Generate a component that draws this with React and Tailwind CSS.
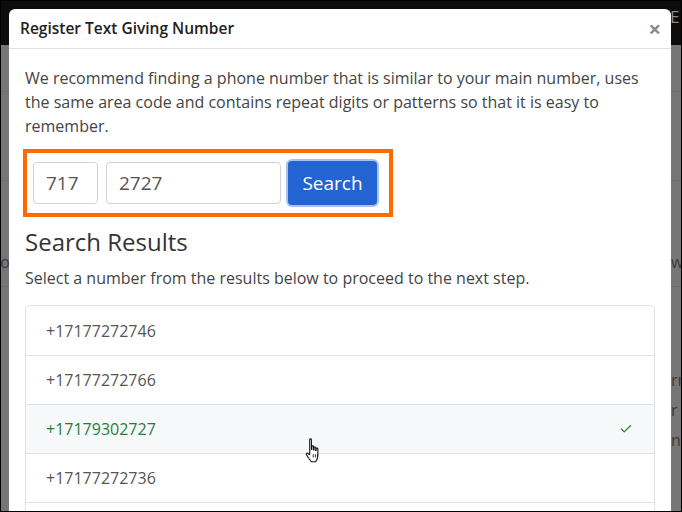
import { Check } from 'lucide-react';

const numeros = [
  { tel: '+17177272746' },
  { tel: '+17177272766' },
  { tel: '+17179302727', elegido: true },
  { tel: '+17177272736' },
  { tel: '+17177272756' },
];

function Cursor() {
  return (
    <svg className="absolute left-[303px] top-[436px]" width="20" height="28" viewBox="0 0 18 26">
      <path
        d="M5 2.5c0-1 1.6-1 1.6 0v9h.4V9c0-1 1.6-1 1.6 0v3h.4v-2c0-1 1.6-1 1.6 0v2.5h.4V11c0-1 1.6-1 1.6 0v6.5c0 2.5-1 4-2 5.5H6.5c-1-1.5-3-4-4.5-6.5-.5-1 .5-2 1.5-1.2L5 16.5z"
        fill="#fff"
        stroke="#111"
        strokeWidth="1"
        strokeLinejoin="round"
      />
      <path d="M8.3 19v-3M10.3 19v-3M12.3 19v-3" stroke="#111" strokeWidth="0.8" />
    </svg>
  );
}

export default function App() {
  return (
    <div
      className="relative w-[682px] h-[512px] overflow-hidden border border-black bg-[#767676]"
      style={{ fontFamily: '"Open Sans", "Noto Sans", sans-serif' }}
    >
      {/* Pagina detras del modal */}
      <div className="h-[44px] bg-[#0c0c0c] flex justify-end pt-[3px] pr-[1px]">
        <span className="w-[10px] overflow-hidden text-[17px] text-[#8a8a8a] whitespace-nowrap">Exa</span>
      </div>
      <div className="h-px bg-[#6c6c6c] mt-[46px]" />
      <div className="h-px bg-[#6c6c6c] mt-[88px]" />
      <div className="flex justify-between mt-[69px] text-[16px] leading-[24px] text-[#3a3a3a]">
        <span className="w-[9px] overflow-hidden whitespace-nowrap flex justify-end">co</span>
        <span className="w-[10px] overflow-hidden whitespace-nowrap">wo</span>
      </div>
      <div className="h-px bg-[#6c6c6c] mt-[12px]" />
      <div className="flex flex-col items-end mt-[81px] gap-[6px] text-[16px] leading-[24px] text-[#3a3a3a]">
        <span className="w-[10px] overflow-hidden whitespace-nowrap">rm</span>
        <span className="w-[10px] overflow-hidden whitespace-nowrap">r c</span>
        <span className="w-[10px] overflow-hidden whitespace-nowrap">n</span>
      </div>

      {/* Modal */}
      <div className="absolute left-[8px] top-[8px] w-[662px] h-[520px] bg-white rounded-t-md">
        <div className="h-[40px] flex items-center justify-between pl-[11px] pr-[10px] border-b border-[#dee2e6]">
          <h5 className="text-[15.5px] font-semibold text-[#222]">Register Text Giving Number</h5>
          <span className="text-[22px] leading-none font-bold text-[#8a8a8a] -mt-[2px]">×</span>
        </div>

        <div className="px-4 pt-[17px]">
          <p className="text-[16px] leading-[24px] text-[#444]">
            We recommend finding a phone number that is similar to your main number, uses the same area code and contains repeat digits or patterns so that it is easy to remember.
          </p>

          <div className="mt-[11px] -ml-[2px] w-[370px] h-[68px] border-[4px] border-[#ff6a00] flex items-center pl-[6px] gap-[8px]">
            <div className="w-[65px] h-[42px] border border-[#ced4da] rounded-[4px] flex items-center pl-[12px] text-[19px] text-[#555]">717</div>
            <div className="w-[175px] h-[42px] border border-[#ced4da] rounded-[4px] flex items-center pl-[12px] text-[19px] text-[#555]">2727</div>
            <div className="-ml-[3px] rounded-[6px] p-[2px] bg-[#a6c3f3]">
              <div className="w-[89px] h-[44px] rounded-[4px] bg-[#2364d2] flex items-center justify-center text-[19px] text-white">Search</div>
            </div>
          </div>

          <h4 className="mt-[9px] text-[24px] leading-[32px] text-[#333]">Search Results</h4>
          <p className="mt-[8px] text-[16px] leading-[24px] text-[#444]">
            Select a number from the results below to proceed to the next step.
          </p>

          <div className="mt-[15px] border border-[#dfe3e8] rounded-[5px]">
            {numeros.map((n, i) => (
              <div
                key={n.tel}
                className={`h-[49px] flex items-center justify-between pl-[20px] pr-[21px] text-[16px] ${i > 0 ? 'border-t border-[#dfe3e8]' : ''} ${n.elegido ? 'bg-[#f7f8fa] text-[#1f7f3a]' : 'text-[#555]'}`}
              >
                <span>{n.tel}</span>
                {n.elegido && <Check size={14} strokeWidth={2} className="text-[#1f7f3a]" />}
              </div>
            ))}
          </div>
        </div>
      </div>

      <Cursor />
    </div>
  );
}
